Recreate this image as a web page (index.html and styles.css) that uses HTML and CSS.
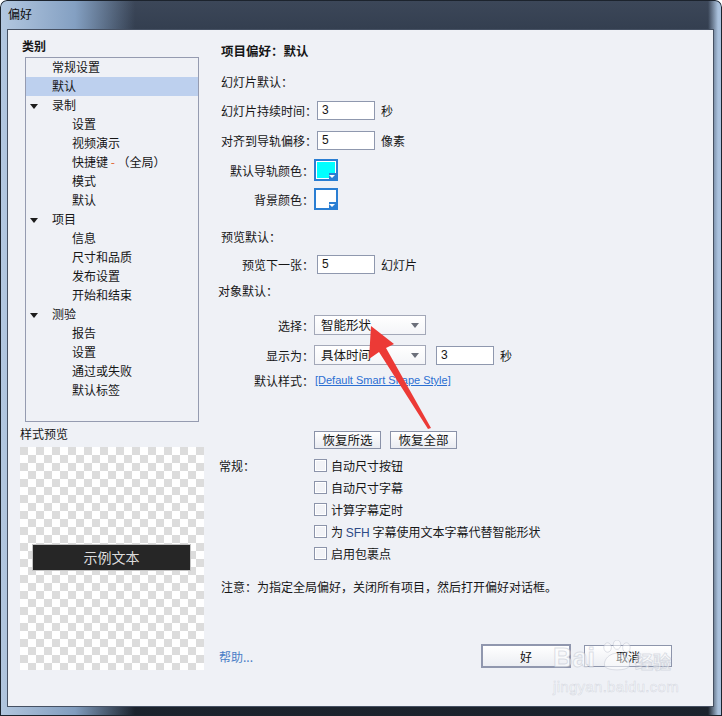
FILE: index.html
```html
<!DOCTYPE html>
<html lang="zh-CN">
<head>
<meta charset="UTF-8">
<meta name="viewport" content="width=device-width, initial-scale=1.0">
<title>偏好</title>
<link rel="stylesheet" href="styles.css">
</head>
<body>

<div class="window">
    <div class="titlebar">偏好</div>

    <div class="client">
        <!-- 左侧：类别树和样式预览 -->
        <div class="sidebar">
            <div class="group-title">类别</div>
            <ul class="tree">
                <li class="lvl1">常规设置</li>
                <li class="lvl1 selected">默认</li>
                <li class="lvl1 open">录制</li>
                <li class="lvl2">设置</li>
                <li class="lvl2">视频演示</li>
                <li class="lvl2">快捷键 <span class="dash">-</span> （全局）</li>
                <li class="lvl2">模式</li>
                <li class="lvl2">默认</li>
                <li class="lvl1 open">项目</li>
                <li class="lvl2">信息</li>
                <li class="lvl2">尺寸和品质</li>
                <li class="lvl2">发布设置</li>
                <li class="lvl2">开始和结束</li>
                <li class="lvl1 open">测验</li>
                <li class="lvl2">报告</li>
                <li class="lvl2">设置</li>
                <li class="lvl2">通过或失败</li>
                <li class="lvl2">默认标签</li>
            </ul>
            <div class="preview-title">样式预览</div>
            <div class="preview">
                <div class="sample">示例文本</div>
            </div>
        </div>

        <!-- 右侧：项目偏好 -->
        <div class="content">
            <div class="heading">项目偏好：默认</div>

            <div class="section gap-11">幻灯片默认：</div>
            <div class="field gap-8">
                <span class="label">幻灯片持续时间：</span>
                <span class="num-input">3</span>
                <span class="unit">秒</span>
            </div>
            <div class="field">
                <span class="label">对齐到导轨偏移：</span>
                <span class="num-input">5</span>
                <span class="unit">像素</span>
            </div>
            <div class="field">
                <span class="label">默认导轨颜色：</span>
                <span class="swatch cyan"></span>
            </div>
            <div class="field gap-9">
                <span class="label">背景颜色：</span>
                <span class="swatch"></span>
            </div>

            <div class="section gap-18">预览默认：</div>
            <div class="field gap-7">
                <span class="label">预览下一张：</span>
                <span class="num-input">5</span>
                <span class="unit">幻灯片</span>
            </div>

            <div class="section gap-7 shift">对象默认：</div>
            <div class="field gap-14">
                <span class="label">选择：</span>
                <span class="select">智能形状</span>
            </div>
            <div class="field">
                <span class="label">显示为：</span>
                <span class="select">具体时间</span>
                <span class="num-input second">3</span>
                <span class="unit">秒</span>
            </div>
            <div class="field gap-5">
                <span class="label">默认样式：</span>
                <a href="#" class="style-link">[Default Smart Shape Style]</a>
            </div>

            <div class="field gap-40">
                <span class="label"></span>
                <button class="small-btn">恢复所选</button>
                <button class="small-btn">恢复全部</button>
            </div>

            <div class="field gap-5">
                <span class="label left">常规：</span>
                <span class="checkbox"></span>
                <span class="check-text">自动尺寸按钮</span>
            </div>
            <div class="field gap-2">
                <span class="label"></span>
                <span class="checkbox"></span>
                <span class="check-text">自动尺寸字幕</span>
            </div>
            <div class="field gap-2">
                <span class="label"></span>
                <span class="checkbox"></span>
                <span class="check-text">计算字幕定时</span>
            </div>
            <div class="field gap-2">
                <span class="label"></span>
                <span class="checkbox"></span>
                <span class="check-text">为 <span class="latin">SFH</span> 字幕使用文本字幕代替智能形状</span>
            </div>
            <div class="field gap-2">
                <span class="label"></span>
                <span class="checkbox"></span>
                <span class="check-text">启用包裹点</span>
            </div>

            <div class="note">注意：为指定全局偏好，关闭所有项目，然后打开偏好对话框。</div>

            <div class="footer">
                <a href="#" class="help">帮助...</a>
                <button class="dlg-btn default">好</button>
                <button class="dlg-btn">取消</button>
            </div>
        </div>
    </div>

    <!-- 截图上的红色箭头标注 -->
    <svg class="arrow" width="722" height="716" viewBox="0 0 722 716">
        <polygon points="371,326 394,344 386,348 431,428 428,429 379,352 369,359" fill="#ec3a36"/>
    </svg>

    <!-- 水印 -->
    <div class="watermark">
        <div class="wm-top">
            <span class="wm-bai">Bai</span>
            <svg class="wm-paw" width="36" height="32" viewBox="0 0 38 34">
                <ellipse cx="9" cy="8" rx="4" ry="5"/>
                <ellipse cx="19" cy="5" rx="4" ry="5"/>
                <ellipse cx="29" cy="8" rx="4" ry="5"/>
                <path d="M6 28 C4 20 12 14 19 14 C26 14 34 20 32 28 C30 33 8 33 6 28 Z"/>
            </svg>
            <span class="wm-jy">经验</span>
        </div>
        <div class="wm-url">jingyan.baidu.com</div>
    </div>
</div>

</body>
</html>
```

FILE: styles.css
```css
body {
    margin: 0;
    font-family: "Noto Sans CJK SC", sans-serif;
    font-size: 12px;
    color: #161616;
}

.window {
    position: relative;
    width: 722px;
    height: 716px;
    box-sizing: border-box;
    padding: 0 8px 9px 7px;
    display: flex;
    flex-direction: column;
    border-radius: 7px 7px 0 0;
    background:
        linear-gradient(90deg, rgba(186, 207, 232, 0.95) 0, rgba(140, 170, 206, 0.9) 75px, rgba(60, 76, 98, 0) 135px, rgba(0, 0, 0, 0) 708px, rgba(176, 200, 228, 0.95) 718px),
        linear-gradient(180deg, #3c4759 0, #343f50 29px, #4a5a72 220px, #2b3543 560px, #1b222c 100%);
    box-shadow: inset 0 0 0 1px #1c232d;
}

.titlebar {
    height: 29px;
    line-height: 28px;
    padding-left: 1px;
    font-size: 12px;
    color: #0c0c0c;
}

.client {
    flex: 1;
    display: flex;
    border: 1px solid #465163;
    background-color: #eff1f6;
}

/* 左侧 */
.sidebar {
    width: 204px;
    padding-top: 8px;
}

.group-title {
    padding-left: 14px;
    line-height: 16px;
    font-weight: bold;
}

.tree {
    list-style: none;
    margin: 3px 0 0 17px;
    padding: 0;
    width: 174px;
    height: 365px;
    box-sizing: border-box;
    border: 1px solid #959bb0;
}

.tree li {
    position: relative;
    height: 19px;
    line-height: 17px;
    white-space: nowrap;
}

.tree .lvl1 {
    padding-left: 26px;
}

.tree .lvl2 {
    padding-left: 46px;
}

.tree .selected {
    background-color: #bdd0ee;
}

.tree .open::before {
    content: "";
    position: absolute;
    left: 4px;
    top: 8px;
    border-left: 4px solid transparent;
    border-right: 4px solid transparent;
    border-top: 5px solid #1c1c1c;
}

.tree .dash {
    color: #e0602a;
}

.preview-title {
    margin-top: 4px;
    padding-left: 12px;
    line-height: 16px;
}

.preview {
    margin: 5px 0 0 12px;
    width: 184px;
    height: 223px;
    padding: 97px 0 0 12px;
    box-sizing: border-box;
    background: repeating-conic-gradient(#ffffff 0 25%, #dcdcdc 0 50%) 0 0 / 16px 16px;
}

.sample {
    width: 159px;
    height: 27px;
    box-sizing: border-box;
    line-height: 24px;
    text-align: center;
    font-size: 14px;
    color: #dcdcdc;
    background-color: #262626;
    border: 1px solid #c4c4c4;
}

/* 右侧 */
.content {
    flex: 1;
    padding: 11px 0 0 9px;
}

.heading {
    height: 20px;
    line-height: 20px;
    font-weight: bold;
    font-size: 12.5px;
}

.section {
    height: 20px;
    line-height: 20px;
    margin-top: 10px;
}

.section.shift {
    margin-left: -3px;
}

.field {
    display: flex;
    align-items: center;
    height: 20px;
    margin-top: 10px;
    white-space: nowrap;
}

.gap-2 { margin-top: 2px; }
.gap-5 { margin-top: 5px; }
.gap-7 { margin-top: 7px; }
.gap-8 { margin-top: 8px; }
.gap-9 { margin-top: 9px; }
.gap-11 { margin-top: 11px; }
.gap-14 { margin-top: 14px; }
.gap-18 { margin-top: 18px; }
.gap-40 { margin-top: 40px; }

.label {
    flex: 0 0 93px;
    width: 93px;
    text-align: right;
    white-space: nowrap;
}

.label.left {
    text-align: left;
    margin-left: -2px;
    padding-right: 2px;
}

.num-input {
    width: 58px;
    height: 19px;
    box-sizing: border-box;
    margin-left: 3px;
    padding-left: 4px;
    line-height: 17px;
    border: 1px solid #8f98ae;
    background-color: #fff;
    font-family: "Liberation Sans", sans-serif;
    font-size: 12px;
}

.num-input.second {
    margin-left: 10px;
}

.unit {
    margin-left: 6px;
}

.swatch {
    position: relative;
    width: 24px;
    height: 22px;
    box-sizing: border-box;
    border: 2px solid #2a7ed3;
    background-color: #fff;
    box-shadow: inset 0 0 0 1px #fff;
}

.swatch.cyan {
    background-color: #00ffff;
}

.swatch::after {
    content: "";
    position: absolute;
    right: 0;
    bottom: 0;
    width: 7px;
    height: 6px;
    background-color: #2a7ed3;
}

.swatch::before {
    content: "";
    position: absolute;
    right: 1px;
    bottom: 1px;
    z-index: 1;
    border-left: 3px solid transparent;
    border-right: 3px solid transparent;
    border-top: 3px solid #fff;
}

.select {
    position: relative;
    width: 112px;
    height: 20px;
    box-sizing: border-box;
    padding-left: 6px;
    line-height: 18px;
    border: 1px solid #a3a8b8;
    background: linear-gradient(#ffffff, #f4f5f8);
    font-size: 12.5px;
}

.select::after {
    content: "";
    position: absolute;
    right: 6px;
    top: 7px;
    border-left: 4px solid transparent;
    border-right: 4px solid transparent;
    border-top: 5px solid #6b6f7a;
}

.style-link {
    margin-left: 1px;
    font-family: "Liberation Sans", sans-serif;
    font-size: 11px;
    color: #2b6fd2;
    text-decoration: underline;
}

.small-btn {
    width: 67px;
    height: 18px;
    padding: 0;
    margin-right: 9px;
    border: 1px solid #8a92a8;
    background: linear-gradient(#ffffff, #e9ebf1);
    font-family: "Noto Sans CJK SC", sans-serif;
    font-size: 12.5px;
    line-height: 16px;
    color: #161616;
}

.checkbox {
    width: 13px;
    height: 13px;
    box-sizing: border-box;
    border: 1px solid #8c94aa;
    background-color: #f2f3f7;
    box-shadow: inset 0 0 0 1px #fff;
}

.check-text {
    margin-left: 4px;
}

.latin {
    font-family: "Liberation Sans", sans-serif;
    color: #2d4a86;
}

.note {
    margin-top: 14px;
    height: 20px;
    line-height: 20px;
}

.footer {
    display: flex;
    align-items: center;
    height: 24px;
    margin-top: 47px;
    padding-right: 41px;
}

.help {
    margin-left: -2px;
    color: #4a7ec6;
    text-decoration: none;
}

.dlg-btn {
    width: 88px;
    height: 22px;
    padding: 0;
    border: 1px solid #8d95ab;
    background: linear-gradient(#ffffff, #eceef3);
    font-family: "Noto Sans CJK SC", sans-serif;
    font-size: 12px;
    color: #111;
}

.dlg-btn.default {
    width: 90px;
    height: 24px;
    margin-left: auto;
    margin-right: 13px;
    border: 2px solid #9097ae;
}

/* 叠加层 */
.arrow {
    position: absolute;
    left: 0;
    top: 0;
    pointer-events: none;
}

.watermark {
    position: absolute;
    left: 553px;
    top: 638px;
    pointer-events: none;
    color: rgba(255, 255, 255, 0.55);
    font-family: "Liberation Sans", sans-serif;
}

.wm-top {
    display: flex;
    align-items: flex-end;
    height: 34px;
}

.wm-bai {
    font-size: 27px;
    font-weight: bold;
    line-height: 28px;
    -webkit-text-stroke: 1px rgba(180, 186, 200, 0.45);
}

.wm-paw {
    margin-left: 4px;
    fill: rgba(255, 255, 255, 0.5);
    stroke: rgba(180, 186, 200, 0.45);
}

.wm-jy {
    font-family: "Noto Sans CJK SC", sans-serif;
    font-size: 18px;
    font-weight: bold;
    line-height: 22px;
    -webkit-text-stroke: 1px rgba(180, 186, 200, 0.45);
}

.wm-url {
    margin-top: 6px;
    font-size: 15px;
    letter-spacing: 0.3px;
    -webkit-text-stroke: 0.6px rgba(180, 186, 200, 0.45);
}
```
